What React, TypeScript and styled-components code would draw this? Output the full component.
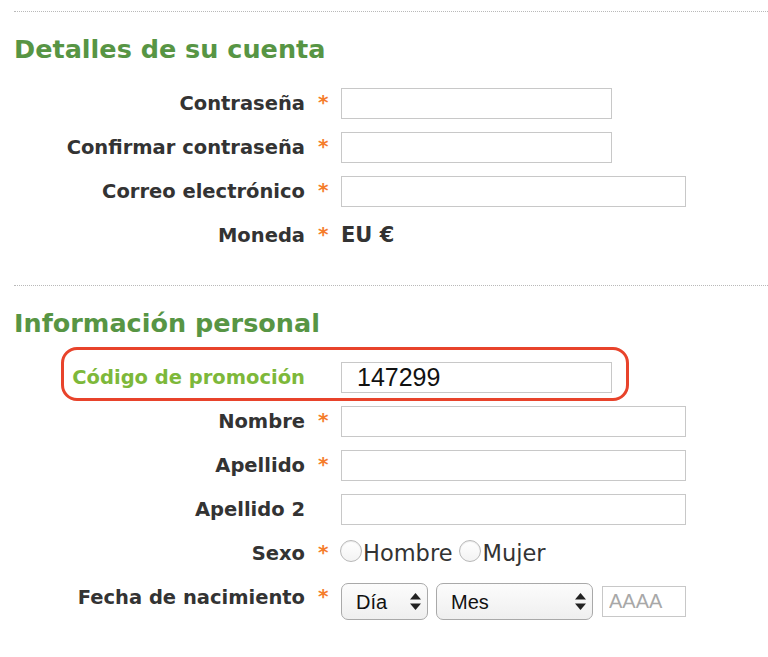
import React from "react";
import styled, { createGlobalStyle } from "styled-components";

const GlobalStyle = createGlobalStyle`
  body {
    margin: 0;
    background: #ffffff;
    font-family: "DejaVu Sans", Verdana, sans-serif;
    color: #333333;
  }
`;

const Page = styled.div`
  padding: 11px 0 0 14px;
  width: 754px;
`;

const Section = styled.section`
  padding-bottom: 28px;
`;

const Divider = styled.div`
  border-top: 1px dotted #b9b9b9;
`;

const Heading = styled.h2`
  margin: 19px 0 14px;
  font-size: 25.5px;
  line-height: 36px;
  font-weight: bold;
  color: #579544;
`;

const Row = styled.div<{ $promo?: boolean }>`
  position: relative;
  display: grid;
  grid-template-columns: 291px 36px 1fr;
  align-items: center;
  height: 44px;

  ${(p) =>
    p.$promo &&
    `
    &::after {
      content: "";
      position: absolute;
      left: 47px;
      top: -8px;
      width: 568px;
      height: 54px;
      box-sizing: border-box;
      border: 3px solid #e8432b;
      border-radius: 16px;
      pointer-events: none;
    }
  `}
`;

const Label = styled.label<{ $promo?: boolean }>`
  text-align: right;
  font-size: 19.5px;
  font-weight: bold;
  color: ${(p) => (p.$promo ? "#7db83a" : "#333333")};
  white-space: nowrap;
`;

const Star = styled.span`
  padding-left: 13px;
  font-size: 20px;
  font-weight: bold;
  color: #f57c2b;
  align-self: start;
  margin-top: 9px;
`;

const Field = styled.div`
  display: flex;
  align-items: center;
  gap: 8px;
`;

const TextInput = styled.input<{ $wide?: boolean }>`
  box-sizing: border-box;
  width: ${(p) => (p.$wide ? "345px" : "271px")};
  height: 31px;
  border: 1px solid #c8c8c8;
  padding: 0 15px;
  font-family: "Liberation Sans", Arial, sans-serif;
  font-size: 25px;
  color: #111111;
  outline: none;
`;

const Value = styled.span`
  font-size: 21px;
  font-weight: bold;
  color: #333333;
`;

const RadioGroup = styled.div`
  display: flex;
  align-items: center;
  margin-left: -1px;
  font-size: 22.5px;
  color: #333333;
`;

const RadioOption = styled.label`
  display: flex;
  align-items: center;
  margin-right: 7px;
`;

const Radio = styled.input`
  appearance: none;
  margin: -4px 1px 0 0;
  width: 22px;
  height: 22px;
  border-radius: 50%;
  border: 1px solid #b8b8b8;
  background: linear-gradient(#ffffff, #f3f3f3);
  box-shadow: inset 0 1px 1px rgba(0, 0, 0, 0.08);
`;

const SelectBox = styled.div<{ $w: number }>`
  position: relative;
  width: ${(p) => p.$w}px;
  height: 37px;
  margin-top: 8px;
`;

const Select = styled.select`
  appearance: none;
  width: 100%;
  height: 100%;
  box-sizing: border-box;
  border: 1px solid #a9a9a9;
  border-radius: 7px;
  background: linear-gradient(#fcfcfc, #efefef);
  padding: 0 0 0 14px;
  font-family: "Liberation Sans", Arial, sans-serif;
  font-size: 20px;
  color: #111111;
  outline: none;
`;

const Arrows = styled.svg`
  position: absolute;
  right: 7px;
  top: 10px;
  pointer-events: none;
`;

const YearInput = styled.input`
  box-sizing: border-box;
  width: 84px;
  height: 31px;
  margin-left: 1px;
  margin-top: 7px;
  border: 1px solid #c8c8c8;
  padding: 0 6px;
  font-family: "Liberation Sans", Arial, sans-serif;
  font-size: 20px;
  outline: none;
  &::placeholder {
    color: #a8a8a8;
  }
`;

const ArrowIcon = () => (
  <Arrows width="11" height="17" viewBox="0 0 11 17">
    <path d="M5.5 0 L11 6.5 L0 6.5 Z" fill="#222" />
    <path d="M5.5 17 L11 10.5 L0 10.5 Z" fill="#222" />
  </Arrows>
);

type FieldRow = { label: string; required?: boolean; wide?: boolean; secret?: boolean };

const accountRows: FieldRow[] = [
  { label: "Contraseña", required: true, secret: true },
  { label: "Confirmar contraseña", required: true, secret: true },
  { label: "Correo electrónico", required: true, wide: true },
];

const personalRows: FieldRow[] = [
  { label: "Nombre", required: true, wide: true },
  { label: "Apellido", required: true, wide: true },
  { label: "Apellido 2", wide: true },
];

const InputRow = ({ label, required, wide, secret }: FieldRow) => (
  <Row>
    <Label>{label}</Label>
    <Star>{required ? "*" : ""}</Star>
    <Field>
      <TextInput type={secret ? "password" : "text"} $wide={wide} />
    </Field>
  </Row>
);

export default function App() {
  return (
    <Page>
      <GlobalStyle />
      <Section>
        <Divider />
        <Heading>Detalles de su cuenta</Heading>
        {accountRows.map((r) => (
          <InputRow key={r.label} {...r} />
        ))}
        <Row>
          <Label>Moneda</Label>
          <Star>*</Star>
          <Field>
            <Value>EU €</Value>
          </Field>
        </Row>
      </Section>

      <Section>
        <Divider />
        <Heading>Información personal</Heading>
        <Row $promo>
          <Label $promo>Código de promoción</Label>
          <Star />
          <Field>
            <TextInput defaultValue="147299" />
          </Field>
        </Row>
        {personalRows.map((r) => (
          <InputRow key={r.label} {...r} />
        ))}
        <Row>
          <Label>Sexo</Label>
          <Star>*</Star>
          <RadioGroup>
            <RadioOption>
              <Radio type="radio" name="sexo" />
              Hombre
            </RadioOption>
            <RadioOption>
              <Radio type="radio" name="sexo" />
              Mujer
            </RadioOption>
          </RadioGroup>
        </Row>
        <Row>
          <Label>Fecha de nacimiento</Label>
          <Star>*</Star>
          <Field>
            <SelectBox $w={87}>
              <Select defaultValue="">
                <option value="">Día</option>
              </Select>
              <ArrowIcon />
            </SelectBox>
            <SelectBox $w={157}>
              <Select defaultValue="">
                <option value="">Mes</option>
              </Select>
              <ArrowIcon />
            </SelectBox>
            <YearInput placeholder="AAAA" />
          </Field>
        </Row>
      </Section>
    </Page>
  );
}
